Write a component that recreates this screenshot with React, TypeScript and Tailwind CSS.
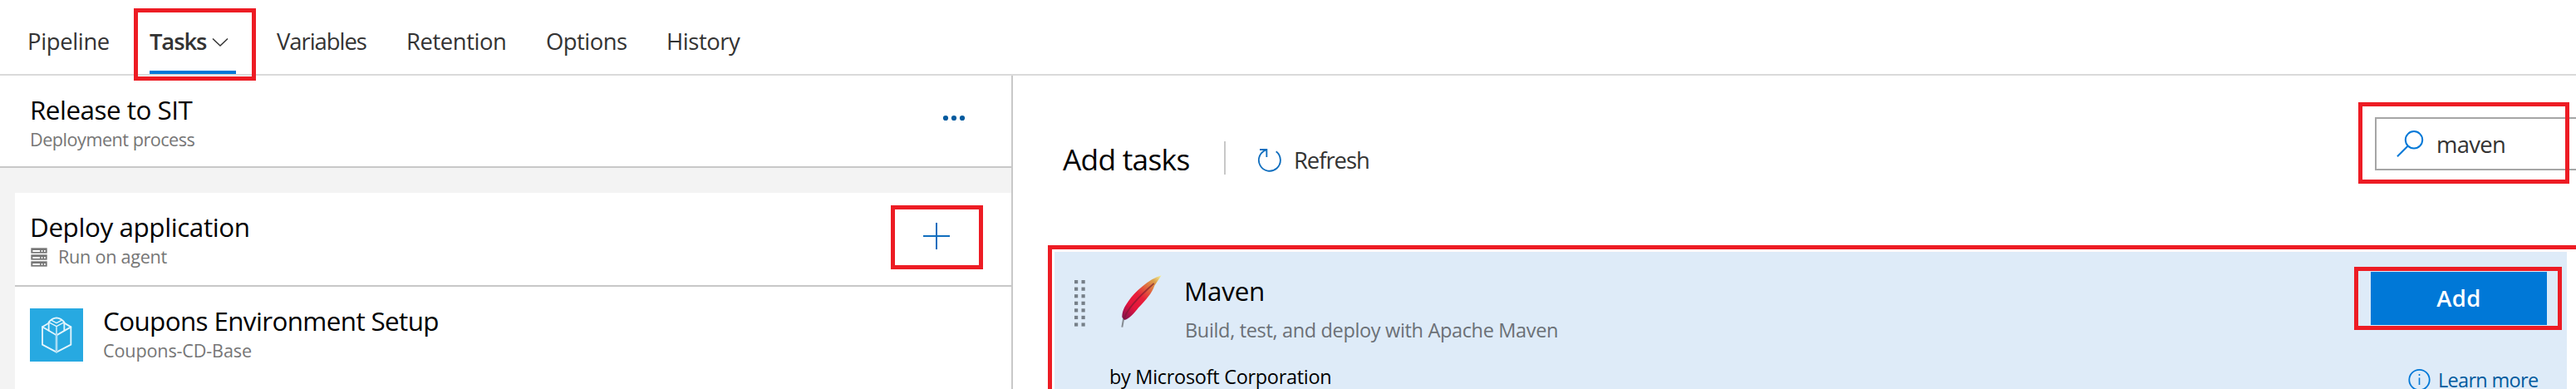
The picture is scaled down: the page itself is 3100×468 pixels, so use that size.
import type { ReactNode } from 'react';

const title = 'block whitespace-nowrap text-[31.4px] leading-10 text-black';
const caption = 'block whitespace-nowrap text-[21.6px] leading-[30px] text-[#767676]';
const navText = 'block whitespace-nowrap text-[27.4px] leading-10 text-[#333333]';

function NavItem({ label, className }: { label: string; className: string }) {
  return (
    <a className={`${navText} shrink-0 pt-[30px] ${className}`}>{label}</a>
  );
}

function Highlight({ className, children }: { className: string; children?: ReactNode }) {
  return <div className={`border-[5px] border-[#ed1c24] ${className}`}>{children}</div>;
}

function NavBar() {
  return (
    <nav className="flex h-[91px] border-b-2 border-[#dadada] pl-[33px]">
      <NavItem label="Pipeline" className="w-[147px] tracking-[-0.33px]" />
      <div className="relative flex w-[153px] shrink-0 flex-col">
        <div className="flex h-[85px] items-start pt-[30px]">
          <span className="block w-[75px] whitespace-nowrap text-[27.4px] font-semibold leading-10 tracking-[-1.1px] text-[#333333] [font-stretch:94%]">
            Tasks
          </span>
          <svg className="mt-[15px] h-[12px] w-[20px]" viewBox="0 0 20 12" fill="none" stroke="#333333" strokeWidth="1.5">
            <path d="M1 1.5 L10 10 L19 1.5" />
          </svg>
        </div>
        <div className="h-1 w-[104px] bg-[#0078d7]" />
        <Highlight className="absolute -left-[19px] top-2.5 z-10 h-[87px] w-[147px]" />
      </div>
      <NavItem label="Variables" className="w-[156px] tracking-[-1.01px]" />
      <NavItem label="Retention" className="w-[168px] tracking-[-0.42px]" />
      <NavItem label="Options" className="w-[145px] tracking-[-0.5px]" />
      <NavItem label="History" className="tracking-[-0.42px]" />
    </nav>
  );
}

function ServerIcon() {
  return (
    <svg className="h-[24px] w-[21px] shrink-0" viewBox="0 0 63 72">
      {[1, 25, 49].map((y) => (
        <g key={y}>
          <rect x="4" y={y} width="58" height="19" fill="#767676" />
          <rect x="10" y={y + 8} width="26" height="6" fill="#fff" />
          <rect x="41" y={y + 8} width="5" height="6" fill="#fff" />
          <rect x="51" y={y + 8} width="5" height="6" fill="#fff" />
        </g>
      ))}
    </svg>
  );
}

function CubeIcon() {
  return (
    <svg className="size-16 shrink-0 bg-[#27a9e1]" viewBox="0 0 192 192" fill="none" stroke="#e4f5fc" strokeWidth="5.5" strokeLinejoin="round" strokeLinecap="round">
      <path d="M68 53 L45 67 V131 L96 158 L148 131 V67 L124 53" />
      <path d="M45 67 L96 97 L148 67" />
      <path d="M68 80 V50 Q80 35 96 34 Q112 35 124 50 V80" />
      <path d="M68 50 L96 65 L124 50 M96 65 V97 M78 43 L96 53 L114 43" strokeWidth="4" />
      <path d="M96 97 V157" stroke="#a8dcf4" strokeWidth="8" />
    </svg>
  );
}

function PipelinePanel() {
  return (
    <section className="flex w-[1219px] shrink-0 flex-col border-r-2 border-[#c8c8c8] bg-[#f3f3f3]">
      <header className="flex h-[111px] items-start border-b-2 border-[#c8c8c8] bg-white pl-9 pr-[55px] pt-[21px]">
        <div>
          <span className={`${title} tracking-[-0.5px]`}>Release to SIT</span>
          <span className={`${caption} mt-px tracking-[-0.48px]`}>Deployment process</span>
        </div>
        <svg className="ml-auto mt-[26px] h-2 w-7" viewBox="0 0 28 8" fill="#005a9e">
          <circle cx="4" cy="4" r="3.1" />
          <circle cx="14" cy="4" r="3.1" />
          <circle cx="24" cy="4" r="3.1" />
        </svg>
      </header>
      <div className="flex-1 pl-[18px] pt-[30px]">
        <div className="flex h-[113px] items-start border-b-2 border-[#c8c8c8] bg-white pl-[18px] pr-[34px]">
          <div className="pt-[21px]">
            <span className={`${title} tracking-[-0.4px]`}>Deploy application</span>
            <div className="flex items-start pt-px">
              <span className="mt-1 flex w-[33px]">
                <ServerIcon />
              </span>
              <span className={`${caption} pl-px tracking-[-0.25px]`}>Run on agent</span>
            </div>
          </div>
          <Highlight className="ml-auto mt-[15px] flex h-[77px] w-[111px] items-start">
            <svg className="ml-[34px] mt-4 size-8" viewBox="0 0 32 32" stroke="#106ebe" strokeWidth="2">
              <path d="M16 0 V32 M0 16 H32" />
            </svg>
          </Highlight>
        </div>
        <div className="flex h-[123px] items-start bg-white pl-[18px]">
          <div className="pt-[26px]">
            <CubeIcon />
          </div>
          <div className="pl-6 pt-[21px]">
            <span className={`${title} tracking-[-0.62px]`}>Coupons Environment Setup</span>
            <span className={`${caption} mt-px tracking-[-0.15px]`}>Coupons-CD-Base</span>
          </div>
        </div>
      </div>
    </section>
  );
}

function FeatherIcon() {
  return (
    <svg className="h-[76px] w-16 shrink-0" viewBox="0 0 192 228" fill="none">
      <defs>
        <linearGradient id="feather" x1="30" y1="185" x2="170" y2="20" gradientUnits="userSpaceOnUse">
          <stop offset="0" stopColor="#6a1550" />
          <stop offset="0.14" stopColor="#a5124c" />
          <stop offset="0.3" stopColor="#e4143c" />
          <stop offset="0.52" stopColor="#e8203a" />
          <stop offset="0.7" stopColor="#e0683f" />
          <stop offset="0.86" stopColor="#dba04a" />
          <stop offset="1" stopColor="#f3ef9a" />
        </linearGradient>
      </defs>
      <path d="M37 172 L31 206" stroke="#858b92" strokeWidth="6" />
      <path d="M173 19 C125 34 78 78 54 112 C38 134 31 150 31 170 L40 180 C58 176 72 158 90 136 C118 106 138 84 148 56 Z" fill="url(#feather)" />
      <path d="M38 176 C48 142 84 102 146 48" stroke="#7a1a30" strokeOpacity="0.65" strokeWidth="5" />
    </svg>
  );
}

function DragHandle() {
  return (
    <svg className="h-[58px] w-[14px] shrink-0" viewBox="0 0 14 58" fill="#767f88">
      {[0, 1, 2, 3, 4, 5, 6].map((i) => (
        <g key={i}>
          <rect x="0" y={i * 8.57} width="4.2" height="4.2" />
          <rect x="8.5" y={i * 8.57} width="4.2" height="4.2" />
        </g>
      ))}
    </svg>
  );
}

function TaskCard() {
  return (
    <article className="flex h-[165px] w-[1820px] flex-col bg-[#deebf8]">
      <div className="flex h-[135px] items-start pl-6">
        <div className="w-[47px] pt-[34px]">
          <DragHandle />
        </div>
        <div className="w-[85px] pt-[22px]">
          <FeatherIcon />
        </div>
        <div className="pt-[27px]">
          <span className={`${title} tracking-[-0.23px]`}>Maven</span>
          <span className="mt-3 block whitespace-nowrap pl-px text-[23.5px] leading-[30px] tracking-[-0.34px] text-[#6b7076]">
            Build, test, and deploy with Apache Maven
          </span>
        </div>
        <Highlight className="ml-auto mr-1.5 mt-[18px] h-[76px] w-[250px] pl-[15px] pt-px">
          <button className="block h-16 w-[212px] bg-[#0078d7] text-center text-[27.4px] font-semibold leading-[64px] tracking-[0.39px] text-white">
            Add
          </button>
        </Highlight>
      </div>
      <div className="flex h-[27px] items-start pl-[66px] pr-[34px]">
        <span className="whitespace-nowrap text-[23.5px] leading-[30px] tracking-[-0.3px] text-black">
          by Microsoft Corporation
        </span>
        <svg className="ml-auto mt-[5px] h-[25px] w-[27px] shrink-0" viewBox="0 0 27 25" fill="none" stroke="#0078d7" strokeWidth="1.8">
          <circle cx="13.5" cy="14" r="12.2" />
          <path d="M13.5 11.5 V20 M13.5 7 V9" strokeWidth="1.6" />
        </svg>
        <a className="ml-[9px] mt-2 w-[121px] shrink-0 whitespace-nowrap text-[23.5px] leading-[22px] tracking-[-0.69px] text-[#005a9e]">
          Learn more
        </a>
      </div>
    </article>
  );
}

function AddTasksPanel() {
  return (
    <section className="flex min-w-0 flex-1 flex-col bg-white">
      <div className="flex h-[204px] items-start pl-[60px]">
        <h2 className="mt-[76px] w-[194px] whitespace-nowrap text-[35.3px] leading-[48px] tracking-[-0.73px] text-black">
          Add tasks
        </h2>
        <div className="mt-[79px] h-10 w-0.5 bg-[#c8c8c8]" />
        <svg className="ml-[25px] mt-[79px] h-[46px] w-[60px]" viewBox="0 0 180 138" fill="none" stroke="#106ebe" strokeWidth="5.5">
          <path d="M107 37 A39 39 0 1 1 72 31" />
          <path d="M48 30 H73 V57" />
        </svg>
        <span className={`${navText} -ml-[3px] mt-[82px] tracking-[-1.04px]`}>Refresh</span>
        <div className="relative ml-auto mt-[50px] flex h-16 w-[242px] items-start border-y-2 border-l-2 border-[#a6a6a6] bg-white pl-6">
          <svg className="mt-[13px] h-[34px] w-[34px] shrink-0" viewBox="0 0 34 34" fill="none" stroke="#0078d7" strokeWidth="2">
            <circle cx="21" cy="12.3" r="10.2" />
            <path d="M13.8 19.5 L1 32.3" />
          </svg>
          <span className={`${navText} ml-[14px] mt-[11px] tracking-[-0.69px]`}>maven</span>
          <Highlight className="absolute -left-[22px] -top-5 h-[98px] w-[254px]" />
        </div>
      </div>
      <div className="ml-[42px] flex-1 border-l-[5px] border-t-[5px] border-[#ed1c24] pl-[3px] pt-[3px]">
        <TaskCard />
      </div>
    </section>
  );
}

export default function App() {
  return (
    <div className="flex h-[468px] w-[3100px] flex-col overflow-hidden bg-white font-['Open_Sans','Noto_Sans',sans-serif]">
      <NavBar />
      <main className="flex min-h-0 flex-1">
        <PipelinePanel />
        <AddTasksPanel />
      </main>
    </div>
  );
}
